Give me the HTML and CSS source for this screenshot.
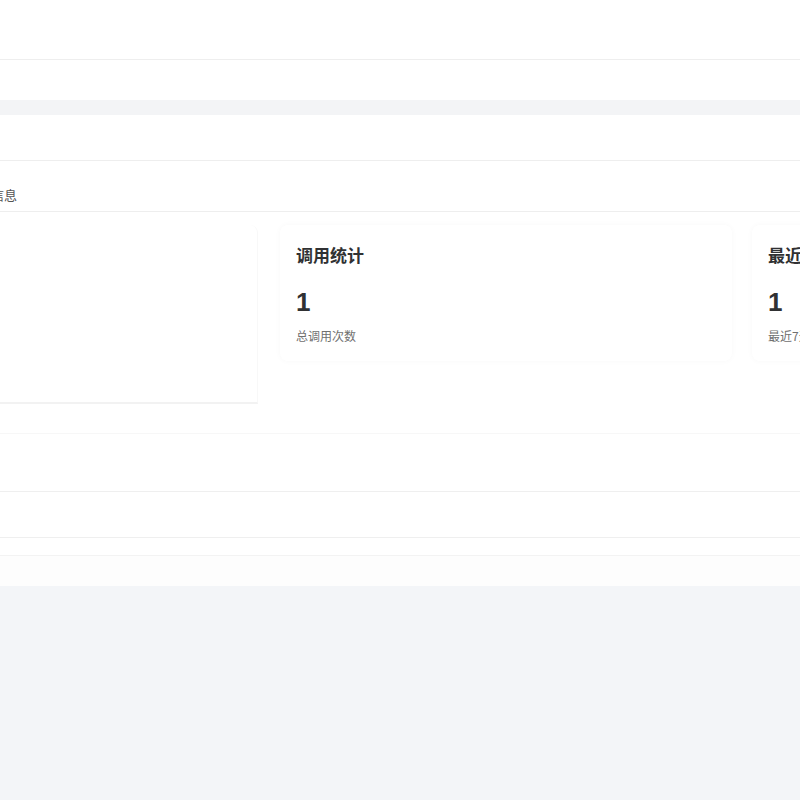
FILE: index.html
```html
<!DOCTYPE html>
<html lang="zh-CN">
<head>
  <meta charset="UTF-8" />
  <meta name="viewport" content="width=device-width, initial-scale=1.0"/>
  <title>接口详情</title>
  <link rel="stylesheet" href="styles.css">
</head>
<body>
  <header class="topbar"></header>
  <div class="subnav"></div>
  <div class="band"></div>

  <main class="page">
    <div class="panel-head"></div>
    <div class="tabs">
      <span class="tab">基本信息</span>
    </div>

    <div class="cards">
      <div class="card card-main"></div>
      <div class="card">
        <h3>调用统计</h3>
        <div class="num">1</div>
        <p class="label">总调用次数</p>
      </div>
      <div class="card">
        <h3>最近7天调用</h3>
        <div class="num">1</div>
        <p class="label">最近7天调用次数</p>
      </div>
    </div>

    <div class="rows">
      <div class="row r1"></div>
      <div class="row r2"></div>
      <div class="row r3"></div>
      <div class="row r4"></div>
      <div class="row r5"></div>
    </div>
  </main>
</body>
</html>
```

FILE: styles.css
```css
body {
  font-family: "Noto Sans CJK SC", "Noto Sans", sans-serif;
  background-color: #f3f5f8;
  color: #303133;
  margin: 0;
  padding: 0;
  overflow: hidden;
}
.topbar {
  height: 59px;
  background-color: #fff;
  border-bottom: 1px solid #eeeeee;
}
.subnav {
  height: 40px;
  background-color: #fff;
}
.band {
  height: 15px;
  background-color: #f3f4f6;
}
.page {
  margin-left: -220px;
  width: 1240px;
  background-color: #fff;
}
.panel-head {
  height: 45px;
  border-bottom: 1px solid #eeeeee;
}
.tabs {
  height: 51px;
  border-bottom: 1px solid #eeeeee;
  display: flex;
  align-items: center;
  padding-left: 185px;
  padding-top: 16px;
  box-sizing: border-box;
}
.tab {
  font-size: 13px;
  color: #555;
}
.cards {
  display: grid;
  grid-template-columns: 458px 452px 452px;
  column-gap: 22px;
  align-items: start;
  padding: 13px 0 0 20px;
}
.cards .card:last-child {
  margin-left: -2px;
}
.card {
  background-color: #fff;
  border-radius: 8px;
  box-shadow: 0 0 6px rgba(0,0,0,0.03);
  padding: 18px 16px 20px;
  height: 136px;
  box-sizing: border-box;
}
.card-main {
  height: 179px;
  box-shadow: none;
  border-right: 1px solid #f8f8f8;
  border-bottom: 2px solid #f2f2f2;
  border-radius: 8px 8px 0 0;
}
.card h3 {
  margin: 0;
  font-size: 17px;
  font-weight: 700;
  line-height: 24px;
  color: #303133;
}
.num {
  margin-top: 20px;
  font-family: "Liberation Sans", Arial, sans-serif;
  font-size: 26px;
  font-weight: 700;
  line-height: 30px;
  color: #303133;
}
.label {
  margin: 10px 0 0;
  font-size: 12px;
  color: #707070;
  line-height: 18px;
}
.row {
  border-bottom: 1px solid #efefef;
}
.r1 { height: 29px; border-bottom-color: #f7f7f7; }
.r2 { height: 57px; }
.r3 { height: 45px; }
.r4 { height: 17px; border-bottom-color: #f3f3f3; }
.r5 { height: 30px; border-bottom: none; background-color: #fdfdfd; }
```
